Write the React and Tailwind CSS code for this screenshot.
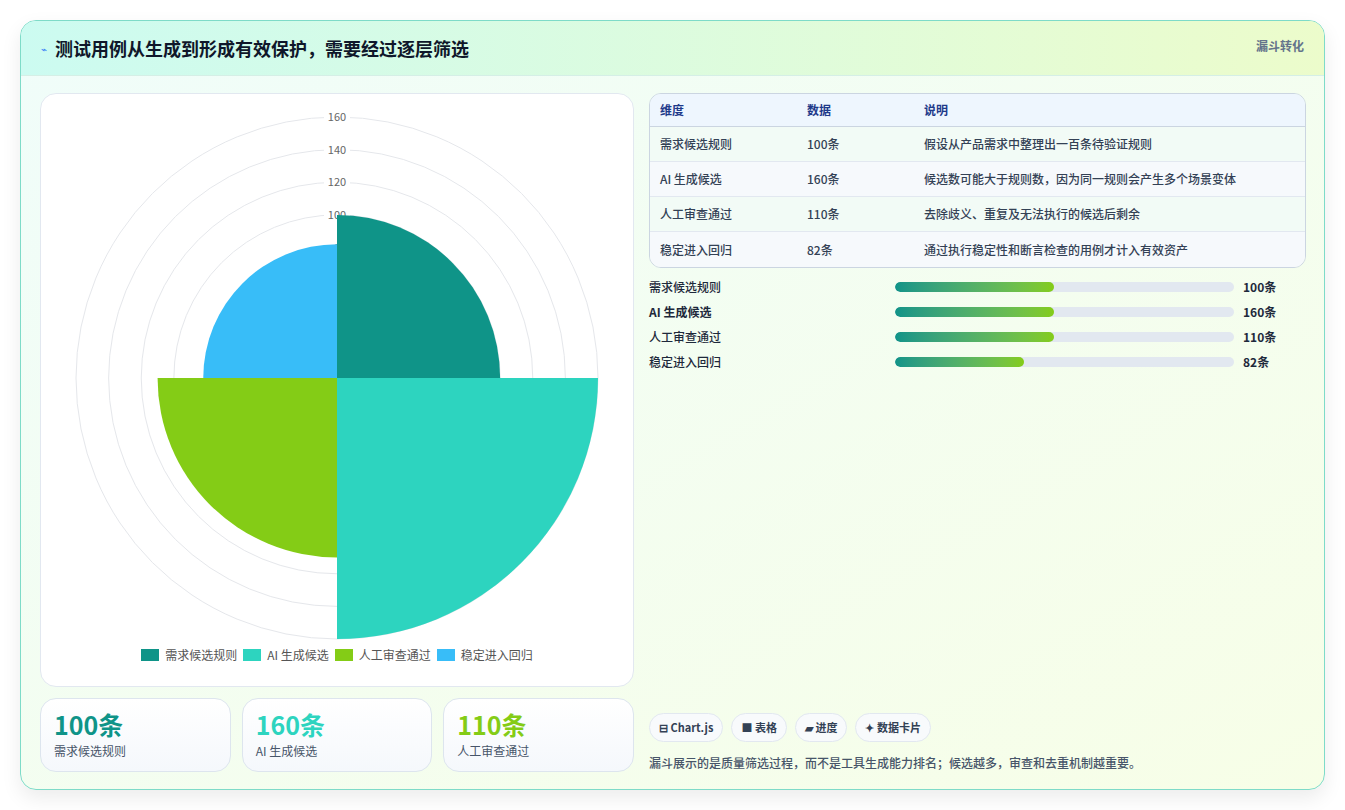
import React from "react";

const F = { fontFamily: '"Noto Sans CJK SC","Noto Sans",sans-serif' };
const rows = [
  ["需求候选规则", "100条", "假设从产品需求中整理出一百条待验证规则"],
  ["AI 生成候选", "160条", "候选数可能大于规则数，因为同一规则会产生多个场景变体"],
  ["人工审查通过", "110条", "去除歧义、重复及无法执行的候选后剩余"],
  ["稳定进入回归", "82条", "通过执行稳定性和断言检查的用例才计入有效资产"],
];
const bars = [["需求候选规则", 47, "100条"], ["AI 生成候选", 47, "160条"], ["人工审查通过", 47, "110条"], ["稳定进入回归", 38, "82条"]];

function arc(cx, cy, r, a0, a1) {
  const p = (a) => [cx + r * Math.cos((a * Math.PI) / 180), cy + r * Math.sin((a * Math.PI) / 180)];
  const [x0, y0] = p(a0), [x1, y1] = p(a1);
  return `M${cx},${cy} L${x0},${y0} A${r},${r} 0 0 1 ${x1},${y1} Z`;
}

function Chart() {
  const cx = 296, cy = 280, k = 261 / 160;
  const segs = [[100, -90, 0, "#0f9488"], [160, 0, 90, "#2dd4bf"], [110, 90, 180, "#84cc16"], [82, 180, 270, "#38bdf8"]];
  return (
    <svg width="593" height="550" viewBox="0 0 593 550">
      {[20, 40, 60, 80, 100, 120, 140, 160].map((v) => (
        <circle key={v} cx={cx} cy={cy} r={v * k} fill="none" stroke="#e5e7eb" strokeWidth="1" />
      ))}
      {[100, 120, 140, 160].map((v) => (
        <g key={v}>
          <rect x={cx - 13} y={cy - v * k - 7} width="26" height="13" fill="white" />
          <text x={cx} y={cy - v * k + 4} textAnchor="middle" fontSize="11" fill="#666" style={F}>{v}</text>
        </g>
      ))}
      <text x={cx - 3} y={cy - 80 * k + 4} fontSize="11" fill="#666">8</text>
      {segs.map(([v, a0, a1, c]) => (
        <path key={c} d={arc(cx, cy, v * k, a0, a1)} fill={c} />
      ))}
    </svg>
  );
}

export default function App() {
  return (
    <div className="w-[1345px] h-[810px] bg-white p-5" style={F}>
      <div className="h-[770px] rounded-2xl border border-[#7edbc8] bg-gradient-to-br from-[#f0fdfa] to-[#f7fee7] shadow-[0_8px_20px_rgba(0,0,0,0.08)] overflow-hidden flex flex-col">
        <div className="h-[55px] shrink-0 flex items-start justify-between px-5 pt-[14px] bg-gradient-to-r from-[#ccfbf1] to-[#ecfccb] border-b border-[#d5efe6]">
          <div className="flex items-center gap-2">
            <span className="text-[10px] text-[#3b82f6]">⌁</span>
            <span className="text-[18px] font-bold text-[#0f172a]">测试用例从生成到形成有效保护，需要经过逐层筛选</span>
          </div>
          <span className="text-[12px] font-bold text-[#64748b] mt-[2px]">漏斗转化</span>
        </div>
        <div className="flex-1 flex gap-[15px] pl-[19px] pr-[18px] pt-[17px] pb-[18px]">
          <div className="w-[594px] flex flex-col gap-[11px]">
            <div className="h-[594px] rounded-2xl border border-[#e2e8f0] bg-white flex flex-col items-center">
              <div className="mt-[4px]"><Chart /></div>
              <div className="flex items-center gap-[6px] text-[12px] text-[#555] -mt-[2px]">
                {[["#0f9488", "需求候选规则"], ["#2dd4bf", "AI 生成候选"], ["#84cc16", "人工审查通过"], ["#38bdf8", "稳定进入回归"]].map(([c, t]) => (
                  <div key={t} className="flex items-center gap-[6px]">
                    <span className="w-[18px] h-[12px]" style={{ background: c }} />
                    <span>{t}</span>
                  </div>
                ))}
              </div>
            </div>
            <div className="flex gap-[11px]">
              {[["100条", "需求候选规则", "#0f9488"], ["160条", "AI 生成候选", "#2dd4bf"], ["110条", "人工审查通过", "#84cc16"]].map(([n, l, c]) => (
                <div key={l} className="w-[191px] h-[74px] rounded-2xl border border-[#dde5ee] bg-gradient-to-b from-white to-[#f5f8fc] px-[13px] pt-[9px]">
                  <div className="text-[25px] font-bold leading-[32px]" style={{ color: c }}>{n}</div>
                  <div className="text-[12px] text-[#475569] mt-[2px]">{l}</div>
                </div>
              ))}
            </div>
          </div>
          <div className="flex-1 flex flex-col">
            <div className="rounded-xl border border-[#cbd5e1] overflow-hidden text-[12px]">
              <div className="flex h-[33px] items-center bg-[#eef6fe] border-b border-[#cbd5e1] text-[#1e3a8a] font-bold">
                <span className="w-[157px] pl-[10px]">维度</span><span className="w-[117px]">数据</span><span>说明</span>
              </div>
              {rows.map((r, i) => (
                <div key={i} className={`flex h-[35px] items-center text-[#334155] font-medium ${i % 2 ? "bg-[#f6f9fc]" : "bg-[#f2fbf6]"} ${i < 3 ? "border-b border-[#e2e8f0]" : ""}`}>
                  <span className="w-[157px] pl-[10px]">{r[0]}</span><span className="w-[117px]">{r[1]}</span><span>{r[2]}</span>
                </div>
              ))}
            </div>
            <div className="flex flex-col gap-[13px] mt-[13px] text-[12px] text-[#1e293b]">
              {bars.map(([l, w, v], i) => (
                <div key={l} className="flex items-center h-[12px]">
                  <span className={`w-[246px] ${i === 1 ? "font-bold" : "font-medium"}`}>{l}</span>
                  <div className="w-[339px] h-[10px] rounded-full bg-[#e2e8f0] overflow-hidden">
                    <div className="h-full rounded-full bg-gradient-to-r from-[#0f9488] to-[#84cc16]" style={{ width: `${w}%` }} />
                  </div>
                  <span className="ml-[9px] font-bold">{v}</span>
                </div>
              ))}
            </div>
            <div className="flex-1" />
            <div className="flex gap-[8px] mb-[12px] text-[11px] font-bold text-[#334155]">
              {["⊟ Chart.js", "■ 表格", "▰ 进度", "✦ 数据卡片"].map((t) => (
                <span key={t} className="h-[29px] px-[9px] flex items-center rounded-full border border-[#e2e8f0] bg-[#f8fafc]">{t}</span>
              ))}
            </div>
            <div className="text-[12px] text-[#475569] font-medium">漏斗展示的是质量筛选过程，而不是工具生成能力排名；候选越多，审查和去重机制越重要。</div>
          </div>
        </div>
      </div>
    </div>
  );
}
